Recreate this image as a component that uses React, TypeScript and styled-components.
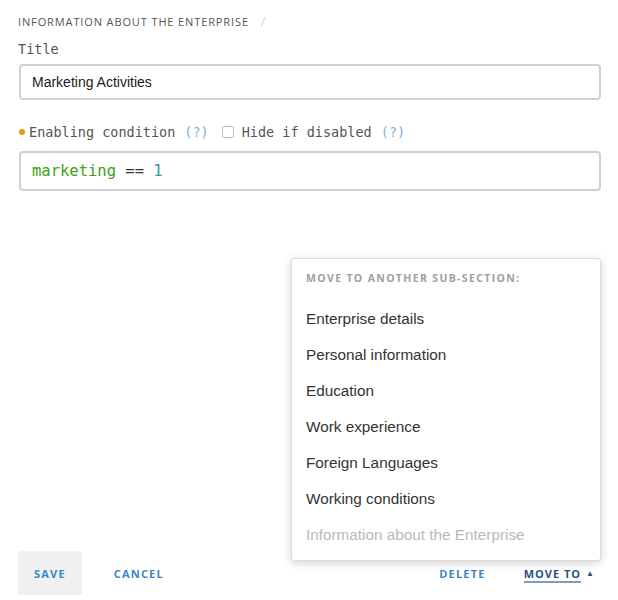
import React from "react";
import styled, { createGlobalStyle } from "styled-components";

const Global = createGlobalStyle`
  html, body { margin: 0; padding: 0; background: #fff; }
  body { font-family: "Liberation Sans", Arial, sans-serif; }
  * { box-sizing: border-box; }
`;

const Page = styled.div`
  position: relative;
  width: 618px;
  height: 600px;
  padding: 13px 18px 0 18px;
  display: flex;
  flex-direction: column;
`;

const Breadcrumb = styled.div`
  display: flex;
  align-items: center;
  gap: 12px;
  height: 16px;
  font-family: "Open Sans", sans-serif;
  font-size: 11px;
  letter-spacing: 0.88px;
  color: #555;
`;

const Slash = styled.span`
  color: #c5d2e0;
  font-size: 12px;
`;

const FieldLabel = styled.div`
  margin-top: 11px;
  font-family: "DejaVu Sans Mono", monospace;
  font-size: 13.5px;
  color: #555;
  height: 18px;
  line-height: 18px;
`;

const Box = styled.div<{ $h: number; $gap: number }>`
  margin-top: ${(p) => p.$gap}px;
  margin-left: 1px;
  width: 582px;
  height: ${(p) => p.$h}px;
  border: 2px solid #d0d0d0;
  border-radius: 4px;
  display: flex;
  align-items: center;
  padding-left: 11px;
`;

const InputText = styled.span`
  font-family: "Liberation Sans", Arial, sans-serif;
  font-size: 14px;
  color: #1a1a1a;
`;

const ConditionRow = styled.div`
  margin-top: 23px;
  display: flex;
  align-items: center;
  height: 18px;
  font-family: "DejaVu Sans Mono", monospace;
  font-size: 13.5px;
  color: #555;
`;

const Dot = styled.span`
  width: 6px;
  height: 6px;
  border-radius: 50%;
  background: #e09b12;
  margin: 0 4px 0 1px;
`;

const Help = styled.span`
  color: #7fb0de;
  margin-left: 9px;
`;

const Check = styled.span`
  width: 12px;
  height: 12px;
  border: 1px solid #b8bec6;
  border-radius: 2px;
  margin: 0 8px 0 13px;
`;

const Code = styled.span`
  font-family: "DejaVu Sans Mono", monospace;
  font-size: 15.5px;
  color: #333;
  white-space: pre;
`;

const Ident = styled.span`
  color: #3da11a;
`;

const Num = styled.span`
  color: #2a9fa0;
`;

const Spacer = styled.div`
  flex: 1;
`;

const Footer = styled.div`
  display: flex;
  align-items: center;
  height: 44px;
  margin-bottom: 5px;
`;

const ActionButton = styled.button<{ $filled?: boolean; $dark?: boolean }>`
  font-family: "Open Sans", sans-serif;
  font-weight: 700;
  font-size: 11px;
  letter-spacing: ${(p) => (p.$dark ? "1px" : "1.2px")};
  color: ${(p) => (p.$dark ? "#2d527c" : "#3a86c8")};
  background: ${(p) => (p.$filled ? "#eef0f2" : "transparent")};
  border: none;
  border-radius: 3px;
  height: 44px;
  padding: 0 16px;
  cursor: pointer;
`;

const MoveLabel = styled.span`
  border-bottom: 2px solid #7f9cba;
`;

const Caret = styled.span`
  font-size: 8px;
  margin-left: 5px;
  vertical-align: 2px;
`;

const Menu = styled.div`
  position: absolute;
  left: 291px;
  top: 258px;
  width: 310px;
  height: 303px;
  background: #fff;
  border: 1px solid #dcdcdc;
  border-radius: 3px;
  box-shadow: 0 2px 8px rgba(0, 0, 0, 0.18);
  padding: 12px 0 0 0;
  display: flex;
  flex-direction: column;
`;

const MenuHeader = styled.div`
  font-family: "Open Sans", sans-serif;
  font-weight: 700;
  font-size: 10.5px;
  letter-spacing: 1.35px;
  color: #9aa0a6;
  padding-left: 14px;
  height: 14px;
  line-height: 14px;
  margin-bottom: 16px;
`;

const MenuItem = styled.div<{ $disabled?: boolean }>`
  font-family: "Liberation Sans", Arial, sans-serif;
  font-size: 15.3px;
  color: ${(p) => (p.$disabled ? "#b9b9b9" : "#333")};
  padding-left: 14px;
  height: 36px;
  line-height: 36px;
`;

const items = [
  "Enterprise details",
  "Personal information",
  "Education",
  "Work experience",
  "Foreign Languages",
  "Working conditions",
];

export default function App() {
  return (
    <>
      <Global />
      <Page>
        <Breadcrumb>
          <span>INFORMATION ABOUT THE ENTERPRISE</span>
          <Slash>/</Slash>
        </Breadcrumb>
        <FieldLabel>Title</FieldLabel>
        <Box $h={36} $gap={6}>
          <InputText>Marketing Activities</InputText>
        </Box>
        <ConditionRow>
          <Dot />
          <span>Enabling condition</span>
          <Help>(?)</Help>
          <Check />
          <span>Hide if disabled</span>
          <Help>(?)</Help>
        </ConditionRow>
        <Box $h={40} $gap={10}>
          <Code>
            <Ident>marketing</Ident> == <Num>1</Num>
          </Code>
        </Box>
        <Spacer />
        <Footer>
          <ActionButton $filled>SAVE</ActionButton>
          <ActionButton style={{ marginLeft: 16 }}>CANCEL</ActionButton>
          <Spacer />
          <ActionButton>DELETE</ActionButton>
          <ActionButton $dark style={{ marginLeft: 6, paddingRight: 5 }}>
            <MoveLabel>MOVE TO</MoveLabel>
            <Caret>▲</Caret>
          </ActionButton>
        </Footer>
        <Menu>
          <MenuHeader>MOVE TO ANOTHER SUB-SECTION:</MenuHeader>
          {items.map((t) => (
            <MenuItem key={t}>{t}</MenuItem>
          ))}
          <MenuItem $disabled>Information about the Enterprise</MenuItem>
        </Menu>
      </Page>
    </>
  );
}
